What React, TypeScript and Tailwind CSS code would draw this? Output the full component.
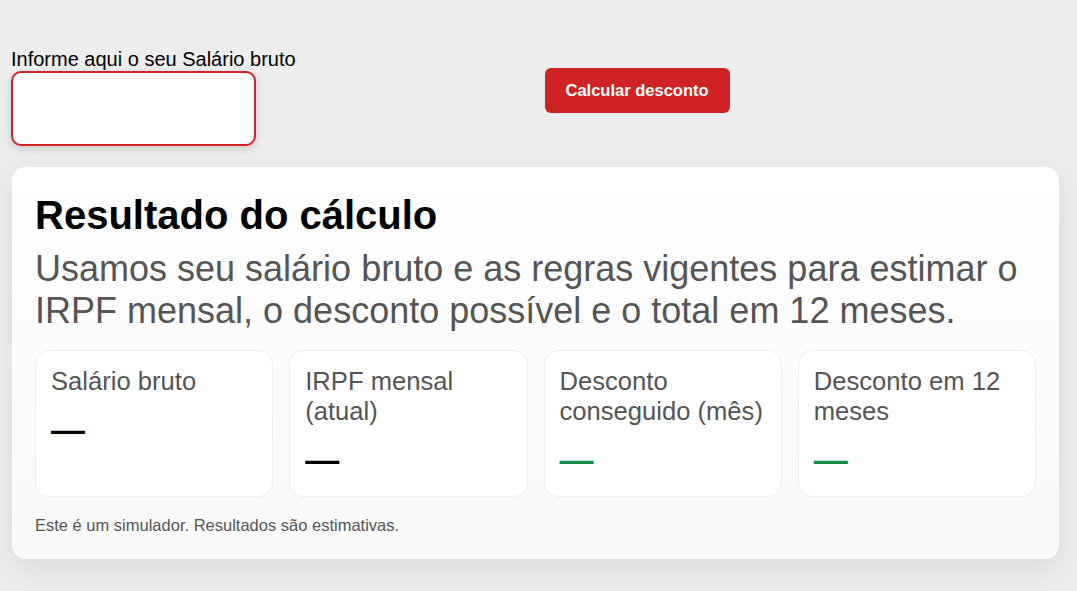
import { useState } from 'react';

const metrics = [
  { label: 'Salário bruto', tone: 'text-black' },
  { label: 'IRPF mensal (atual)', tone: 'text-black' },
  { label: 'Desconto conseguido (mês)', tone: 'text-[#138a4c]' },
  { label: 'Desconto em 12 meses', tone: 'text-[#138a4c]' },
];

export default function App() {
  const [salario, setSalario] = useState('');

  return (
    <div className="min-h-[591px] bg-[#ededed] pl-3 pr-[18px] pt-[48px] pb-8 font-['Liberation_Sans',Arial,sans-serif] text-black">
      <div className="grid grid-cols-2 gap-3">
        <div className="flex flex-col">
          <label htmlFor="salario" className="-ml-px text-[20px] leading-[23px]">
            Informe aqui o seu Salário bruto
          </label>
          <input
            id="salario"
            value={salario}
            onChange={(e) => setSalario(e.target.value)}
            className="-ml-px h-[75px] w-[245px] rounded-[10px] border-2 border-[#d12424] bg-white px-3 text-[20px] shadow-[0_3px_8px_rgba(0,0,0,0.15)] outline-none"
          />
        </div>
        <div className="pt-[20px] pl-[3px]">
          <button className="h-[45px] rounded-[6px] bg-[#cf2323] px-[21px] text-[16.5px] font-bold text-white">
            Calcular desconto
          </button>
        </div>
      </div>

      <section className="mt-[21px] rounded-[14px] bg-gradient-to-b from-white to-[#f9f9f9] px-[23px] pt-6 pb-[21px] shadow-[0_10px_30px_rgba(0,0,0,0.08)]">
        <h2 className="text-[40px] leading-[48px] font-bold">Resultado do cálculo</h2>
        <p className="mt-[9px] text-[36px] leading-[42px] text-[#555]">
          Usamos seu salário bruto e as regras vigentes para estimar o IRPF mensal, o desconto possível e o total em 12 meses.
        </p>

        <div className="mt-[18px] grid grid-cols-4 gap-4">
          {metrics.map((m) => (
            <div key={m.label} className="h-[147px] rounded-[14px] border border-[#eeeeee] bg-white px-[15px] pt-[15px]">
              <div className="text-[25.6px] leading-[30px] text-[#555]">{m.label}</div>
              <div className={`mt-[14px] text-[34px] leading-[39px] font-bold ${m.tone}`}>—</div>
            </div>
          ))}
        </div>

        <p className="mt-[16px] text-[16.5px] text-[#555]">Este é um simulador. Resultados são estimativas.</p>
      </section>
    </div>
  );
}
